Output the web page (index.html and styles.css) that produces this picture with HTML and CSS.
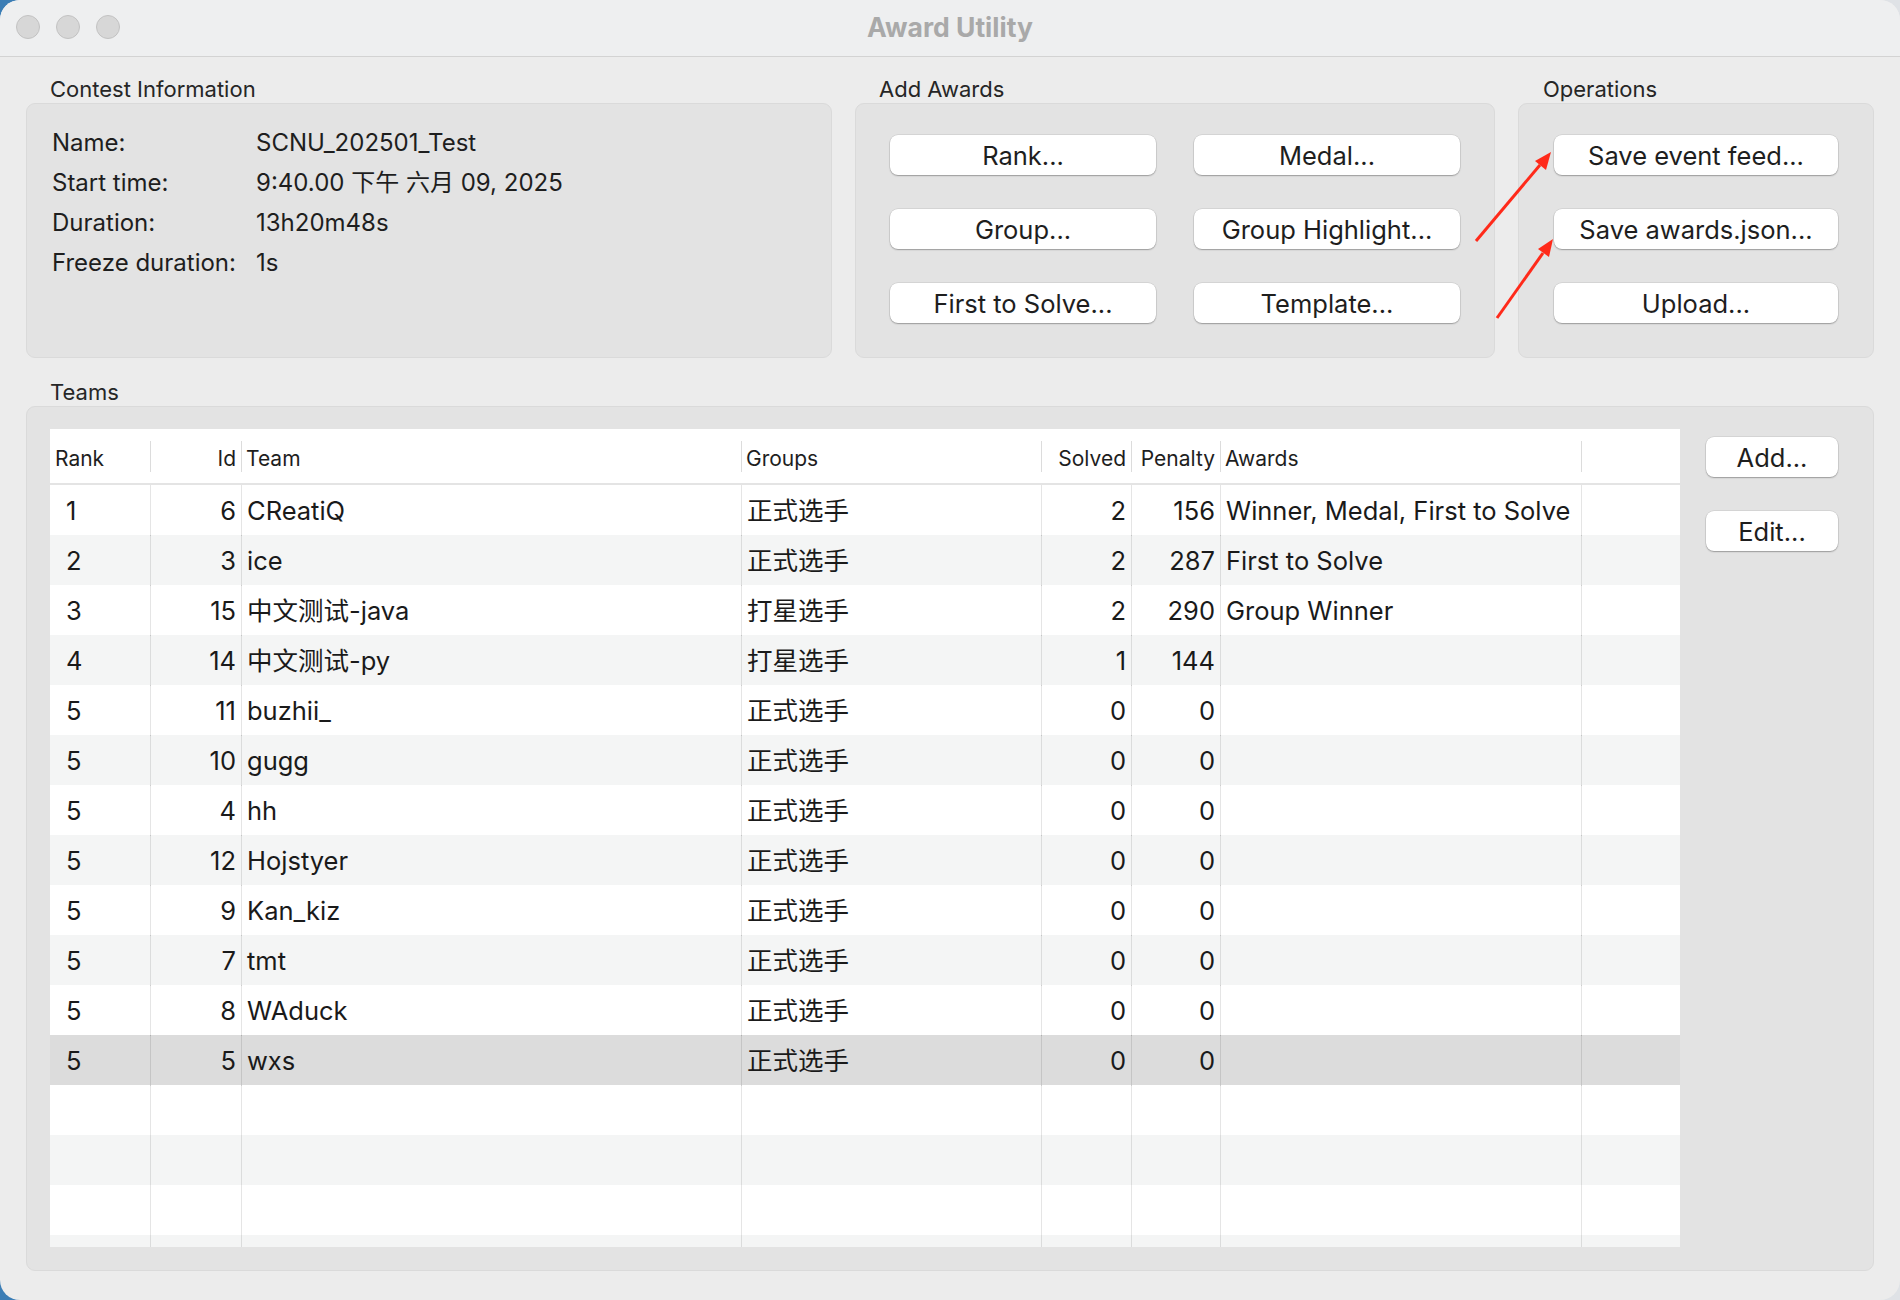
FILE: index.html
```html
<!DOCTYPE html>
<html lang="zh">
<head>
<meta charset="utf-8">
<title>Award Utility</title>
<link rel="stylesheet" href="styles.css">
</head>
<body>
<div class="window">
  <div class="titlebar">
    <div class="lights"><span class="light"></span><span class="light"></span><span class="light"></span></div>
    <div class="title">Award Utility</div>
    <div></div>
  </div>
  <div class="content">
    <div class="top-row">
      <section class="group g-info">
        <div class="group-label">Contest Information</div>
        <div class="box info-box">
          <div class="info-row"><span>Name:</span><span>SCNU_202501_Test</span></div>
          <div class="info-row"><span>Start time:</span><span>9:40.00 下午 六月 09, 2025</span></div>
          <div class="info-row"><span>Duration:</span><span>13h20m48s</span></div>
          <div class="info-row"><span>Freeze duration:</span><span>1s</span></div>
        </div>
      </section>
      <section class="group g-awards">
        <div class="group-label">Add Awards</div>
        <div class="box awards-box">
          <button class="btn">Rank...</button>
          <button class="btn">Medal...</button>
          <button class="btn">Group...</button>
          <button class="btn">Group Highlight...</button>
          <button class="btn">First to Solve...</button>
          <button class="btn">Template...</button>
        </div>
      </section>
      <section class="group g-ops">
        <div class="group-label">Operations</div>
        <div class="box ops-box">
          <button class="btn">Save event feed...</button>
          <button class="btn">Save awards.json...</button>
          <button class="btn">Upload...</button>
        </div>
      </section>
    </div>
    <div class="group-label teams-label">Teams</div>
    <div class="box teams-box">
      <div class="table">
        <div class="thead">
          <div class="th c-rank">Rank</div>
          <div class="th r">Id</div>
          <div class="th">Team</div>
          <div class="th">Groups</div>
          <div class="th r">Solved</div>
          <div class="th r">Penalty</div>
          <div class="th">Awards</div>
          <div class="th"></div>
        </div>
        <div class="tbody">
          <div class="tr"><div class="td c-rank">1</div><div class="td r">6</div><div class="td">CReatiQ</div><div class="td">正式选手</div><div class="td r">2</div><div class="td r">156</div><div class="td">Winner, Medal, First to Solve</div><div class="td"></div></div>
          <div class="tr"><div class="td c-rank">2</div><div class="td r">3</div><div class="td">ice</div><div class="td">正式选手</div><div class="td r">2</div><div class="td r">287</div><div class="td">First to Solve</div><div class="td"></div></div>
          <div class="tr"><div class="td c-rank">3</div><div class="td r">15</div><div class="td">中文测试-java</div><div class="td">打星选手</div><div class="td r">2</div><div class="td r">290</div><div class="td">Group Winner</div><div class="td"></div></div>
          <div class="tr"><div class="td c-rank">4</div><div class="td r">14</div><div class="td">中文测试-py</div><div class="td">打星选手</div><div class="td r">1</div><div class="td r">144</div><div class="td"></div><div class="td"></div></div>
          <div class="tr"><div class="td c-rank">5</div><div class="td r">11</div><div class="td">buzhii_</div><div class="td">正式选手</div><div class="td r">0</div><div class="td r">0</div><div class="td"></div><div class="td"></div></div>
          <div class="tr"><div class="td c-rank">5</div><div class="td r">10</div><div class="td">gugg</div><div class="td">正式选手</div><div class="td r">0</div><div class="td r">0</div><div class="td"></div><div class="td"></div></div>
          <div class="tr"><div class="td c-rank">5</div><div class="td r">4</div><div class="td">hh</div><div class="td">正式选手</div><div class="td r">0</div><div class="td r">0</div><div class="td"></div><div class="td"></div></div>
          <div class="tr"><div class="td c-rank">5</div><div class="td r">12</div><div class="td">Hojstyer</div><div class="td">正式选手</div><div class="td r">0</div><div class="td r">0</div><div class="td"></div><div class="td"></div></div>
          <div class="tr"><div class="td c-rank">5</div><div class="td r">9</div><div class="td">Kan_kiz</div><div class="td">正式选手</div><div class="td r">0</div><div class="td r">0</div><div class="td"></div><div class="td"></div></div>
          <div class="tr"><div class="td c-rank">5</div><div class="td r">7</div><div class="td">tmt</div><div class="td">正式选手</div><div class="td r">0</div><div class="td r">0</div><div class="td"></div><div class="td"></div></div>
          <div class="tr"><div class="td c-rank">5</div><div class="td r">8</div><div class="td">WAduck</div><div class="td">正式选手</div><div class="td r">0</div><div class="td r">0</div><div class="td"></div><div class="td"></div></div>
          <div class="tr sel"><div class="td c-rank">5</div><div class="td r">5</div><div class="td">wxs</div><div class="td">正式选手</div><div class="td r">0</div><div class="td r">0</div><div class="td"></div><div class="td"></div></div>
          <div class="tr"><div class="td"></div><div class="td"></div><div class="td"></div><div class="td"></div><div class="td"></div><div class="td"></div><div class="td"></div><div class="td"></div></div>
          <div class="tr"><div class="td"></div><div class="td"></div><div class="td"></div><div class="td"></div><div class="td"></div><div class="td"></div><div class="td"></div><div class="td"></div></div>
          <div class="tr"><div class="td"></div><div class="td"></div><div class="td"></div><div class="td"></div><div class="td"></div><div class="td"></div><div class="td"></div><div class="td"></div></div>
          <div class="tr"><div class="td"></div><div class="td"></div><div class="td"></div><div class="td"></div><div class="td"></div><div class="td"></div><div class="td"></div><div class="td"></div></div>
        </div>
      </div>
      <div class="side-buttons">
        <button class="btn">Add...</button>
        <button class="btn">Edit...</button>
      </div>
    </div>
  </div>
  <svg class="arrows" width="1900" height="1300" viewBox="0 0 1900 1300">
    <line x1="1476" y1="241" x2="1540" y2="165" stroke="#ff2a1a" stroke-width="3"/>
    <polygon points="1551,152 1546,170 1535,161" fill="#ff2a1a"/>
    <line x1="1497" y1="318" x2="1543" y2="253" stroke="#ff2a1a" stroke-width="3"/>
    <polygon points="1553,239 1549,257 1538,249" fill="#ff2a1a"/>
  </svg>
</div>
</body>
</html>
```
FILE: styles.css
```css
* { box-sizing: border-box; }
html, body { margin: 0; padding: 0; }
body {
  width: 1900px;
  height: 1300px;
  overflow: hidden;
  background: linear-gradient(90deg, #3b7db5 0%, #3b7db5 50%, #dfe2e6 50%, #dfe2e6 100%);
  font-family: "Inter", "Noto Sans CJK SC", sans-serif;
  color: #1e1e1e;
}
.window {
  position: relative;
  width: 1900px;
  height: 1300px;
  background: #ececec;
  border-radius: 20px;
  overflow: hidden;
}
.titlebar {
  height: 57px;
  background: #eeeff0;
  border-bottom: 1px solid #d3d3d3;
  display: grid;
  grid-template-columns: 1fr auto 1fr;
  align-items: center;
}
.lights {
  display: flex;
  gap: 16px;
  padding-left: 16px;
  padding-bottom: 2px;
}
.light {
  width: 24px;
  height: 24px;
  border-radius: 50%;
  background: #d7d7d7;
  border: 1px solid #c2c2c2;
}
.title {
  font-size: 26.5px;
  font-weight: 700;
  color: #a9a9a9;
  line-height: 52px;
  padding-bottom: 2px;
}
.content {
  padding: 20px 26px 0 26px;
}
.top-row {
  display: flex;
  gap: 23px;
}
.g-info { width: 806px; }
.g-awards { width: 640px; }
.g-ops { width: 356px; }
.group-label {
  font-size: 22px;
  line-height: 25px;
  padding-left: 24px;
  margin-bottom: 1px;
  color: #262626;
}
.g-ops .group-label { padding-left: 25px; }
.box {
  background: #e3e3e3;
  border: 1px solid #dadada;
  border-radius: 9px;
}
.info-box {
  height: 255px;
  padding: 19px 0 0 25px;
}
.info-row {
  display: grid;
  grid-template-columns: 204px 1fr;
  font-size: 24px;
  line-height: 40px;
  color: #1e1e1e;
}
.awards-box {
  height: 255px;
  padding: 31px 34px;
  display: grid;
  grid-template-columns: 266px 266px;
  grid-auto-rows: 40px;
  column-gap: 38px;
  row-gap: 34px;
}
.ops-box {
  height: 255px;
  padding: 31px 35px;
  display: grid;
  grid-template-columns: 284px;
  grid-auto-rows: 40px;
  row-gap: 34px;
}
.btn {
  font-family: "Inter", "Noto Sans CJK SC", sans-serif;
  font-size: 25.5px;
  color: #1e1e1e;
  background: #ffffff;
  border: none;
  border-radius: 8px;
  height: 40px;
  padding: 0;
  text-align: center;
  box-shadow: 0 0 0 0.5px rgba(0, 0, 0, 0.12), 0 1px 1.5px rgba(0, 0, 0, 0.28);
}
.teams-label {
  margin-top: 22px;
  margin-bottom: 1px;
}
.teams-box {
  height: 865px;
  padding: 22px 35px 0 23px;
  display: flex;
  gap: 26px;
}
.table {
  width: 1630px;
  height: 818px;
  background: #ffffff;
  overflow: hidden;
  flex: none;
}
.thead, .tr {
  display: grid;
  grid-template-columns: 100px 91px 500px 300px 90px 89px 361px 1fr;
}
.thead {
  height: 56px;
  border-bottom: 2px solid #e4e4e4;
}
.th {
  position: relative;
  display: flex;
  align-items: center;
  padding: 5px 6px 0 5px;
  font-size: 21px;
  line-height: 24px;
  color: #1e1e1e;
  white-space: nowrap;
}
.th + .th::before {
  content: "";
  position: absolute;
  left: 0;
  top: 12px;
  width: 1px;
  height: 31px;
  background: #dcdcdc;
}
.th.c-rank { padding-left: 5px; }
.th.r { justify-content: flex-end; padding-right: 5px; }
.tr {
  height: 50px;
  background: #ffffff;
}
.tr:nth-child(even) { background: #f4f5f5; }
.tr.sel { background: #dcdcdc; }
.td {
  font-size: 25.5px;
  line-height: 51px;
  padding: 0 6px 0 5px;
  white-space: nowrap;
  color: #1a1a1a;
}
.td + .td { border-left: 1px solid rgba(0, 0, 0, 0.1); }
.td.c-rank { padding-left: 16px; }
.td.r { text-align: right; padding-right: 5px; }
.side-buttons {
  width: 132px;
  padding-top: 8px;
  display: flex;
  flex-direction: column;
  gap: 34px;
}
.side-buttons .btn { width: 132px; }
.arrows {
  position: absolute;
  left: 0;
  top: 0;
  pointer-events: none;
}
```
